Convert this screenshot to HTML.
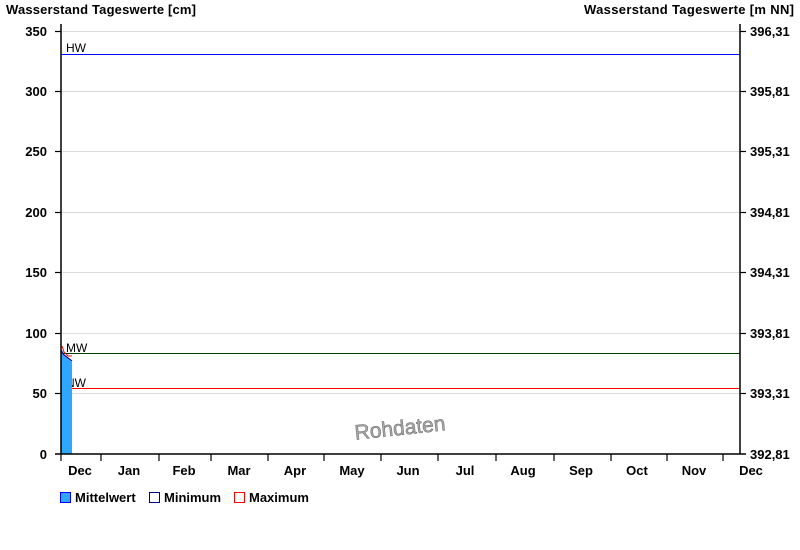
<!DOCTYPE html>
<html><head><meta charset="utf-8"><style>
html,body{margin:0;padding:0;background:#fff;}
svg{display:block;font-family:"Liberation Sans",Arial,sans-serif;}
.b{font-weight:bold;font-size:13px;fill:#000;}
</style></head><body>
<svg width="800" height="550" viewBox="0 0 800 550" xmlns="http://www.w3.org/2000/svg">
<rect width="800" height="550" fill="#fff"/>
<text x="6" y="14" class="b" textLength="190">Wasserstand Tageswerte [cm]</text>
<text x="584" y="14" class="b" textLength="210">Wasserstand Tageswerte [m NN]</text>
<g stroke="#dcdcdc" stroke-width="1">
<line x1="61" x2="740" y1="31.5" y2="31.5"/>
<line x1="61" x2="740" y1="91.5" y2="91.5"/>
<line x1="61" x2="740" y1="151.5" y2="151.5"/>
<line x1="61" x2="740" y1="212.5" y2="212.5"/>
<line x1="61" x2="740" y1="272.5" y2="272.5"/>
<line x1="61" x2="740" y1="333.5" y2="333.5"/>
<line x1="61" x2="740" y1="393.5" y2="393.5"/>
</g>
<line x1="61" x2="740" y1="54.5" y2="54.5" stroke="#0000ff"/>
<line x1="61" x2="740" y1="353.5" y2="353.5" stroke="#003c00"/>
<line x1="61" x2="740" y1="388.5" y2="388.5" stroke="#ff0000"/>
<text x="66" y="52" font-size="12">HW</text>
<text x="66" y="352" font-size="12">MW</text>
<text x="66" y="387" font-size="12">NW</text>
<polygon points="61,352 64,356 68,359 72,362 72,454 61,454" fill="#2fa7ff"/>
<polyline points="61,350 64,355 68,358 72,361" fill="none" stroke="#00008b" stroke-width="1.2"/>
<polyline points="62,346 64,352 68,356 72,356" fill="none" stroke="#ff0000" stroke-width="1"/>
<text x="400" y="435" font-size="21" fill="#aaa" stroke="#666" stroke-width="0.5" text-anchor="middle" transform="rotate(-6 400 428)">Rohdaten</text>
<g stroke="#000" stroke-width="1.5">
<line x1="61" x2="61" y1="24" y2="454"/>
<line x1="740" x2="740" y1="24" y2="454"/>
<line x1="55" x2="746" y1="454" y2="454"/>
</g>
<g stroke="#000" stroke-width="1.2">
<line x1="55" x2="61" y1="31.5" y2="31.5"/><line x1="55" x2="61" y1="91.5" y2="91.5"/>
<line x1="55" x2="61" y1="151.5" y2="151.5"/><line x1="55" x2="61" y1="212.5" y2="212.5"/>
<line x1="55" x2="61" y1="272.5" y2="272.5"/><line x1="55" x2="61" y1="333.5" y2="333.5"/>
<line x1="55" x2="61" y1="393.5" y2="393.5"/>
<line x1="740" x2="746" y1="31.5" y2="31.5"/><line x1="740" x2="746" y1="91.5" y2="91.5"/>
<line x1="740" x2="746" y1="151.5" y2="151.5"/><line x1="740" x2="746" y1="212.5" y2="212.5"/>
<line x1="740" x2="746" y1="272.5" y2="272.5"/><line x1="740" x2="746" y1="333.5" y2="333.5"/>
<line x1="740" x2="746" y1="393.5" y2="393.5"/>
<line x1="61" x2="61" y1="454" y2="461"/><line x1="101" x2="101" y1="454" y2="461"/>
<line x1="159" x2="159" y1="454" y2="461"/><line x1="211" x2="211" y1="454" y2="461"/>
<line x1="268" x2="268" y1="454" y2="461"/><line x1="324" x2="324" y1="454" y2="461"/>
<line x1="381" x2="381" y1="454" y2="461"/><line x1="438" x2="438" y1="454" y2="461"/>
<line x1="496" x2="496" y1="454" y2="461"/><line x1="554" x2="554" y1="454" y2="461"/>
<line x1="611" x2="611" y1="454" y2="461"/><line x1="667" x2="667" y1="454" y2="461"/>
<line x1="723" x2="723" y1="454" y2="461"/>
</g>
<g text-anchor="end">
<text x="47" y="36" class="b">350</text><text x="47" y="96" class="b">300</text>
<text x="47" y="156" class="b">250</text><text x="47" y="217" class="b">200</text>
<text x="47" y="277" class="b">150</text><text x="47" y="338" class="b">100</text>
<text x="47" y="398" class="b">50</text><text x="47" y="459" class="b">0</text>
</g>
<g>
<text x="750" y="36" class="b">396,31</text><text x="750" y="96" class="b">395,81</text>
<text x="750" y="156" class="b">395,31</text><text x="750" y="217" class="b">394,81</text>
<text x="750" y="277" class="b">394,31</text><text x="750" y="338" class="b">393,81</text>
<text x="750" y="398" class="b">393,31</text><text x="750" y="459" class="b">392,81</text>
</g>
<g text-anchor="middle">
<text x="80" y="475" class="b">Dec</text><text x="129" y="475" class="b">Jan</text>
<text x="184" y="475" class="b">Feb</text><text x="239" y="475" class="b">Mar</text>
<text x="295" y="475" class="b">Apr</text><text x="352" y="475" class="b">May</text>
<text x="408" y="475" class="b">Jun</text><text x="465" y="475" class="b">Jul</text>
<text x="523" y="475" class="b">Aug</text><text x="581" y="475" class="b">Sep</text>
<text x="637" y="475" class="b">Oct</text><text x="694" y="475" class="b">Nov</text>
<text x="751" y="475" class="b">Dec</text>
</g>
<rect x="60.5" y="492.5" width="10" height="10" fill="#2fa7ff" stroke="#0000ff"/>
<text x="75" y="502" class="b">Mittelwert</text>
<rect x="149.5" y="492.5" width="10" height="10" fill="#fff" stroke="#00008b"/>
<text x="164" y="502" class="b">Minimum</text>
<rect x="234.5" y="492.5" width="10" height="10" fill="#fff" stroke="#ff0000"/>
<text x="249" y="502" class="b">Maximum</text>
</svg>
</body></html>
